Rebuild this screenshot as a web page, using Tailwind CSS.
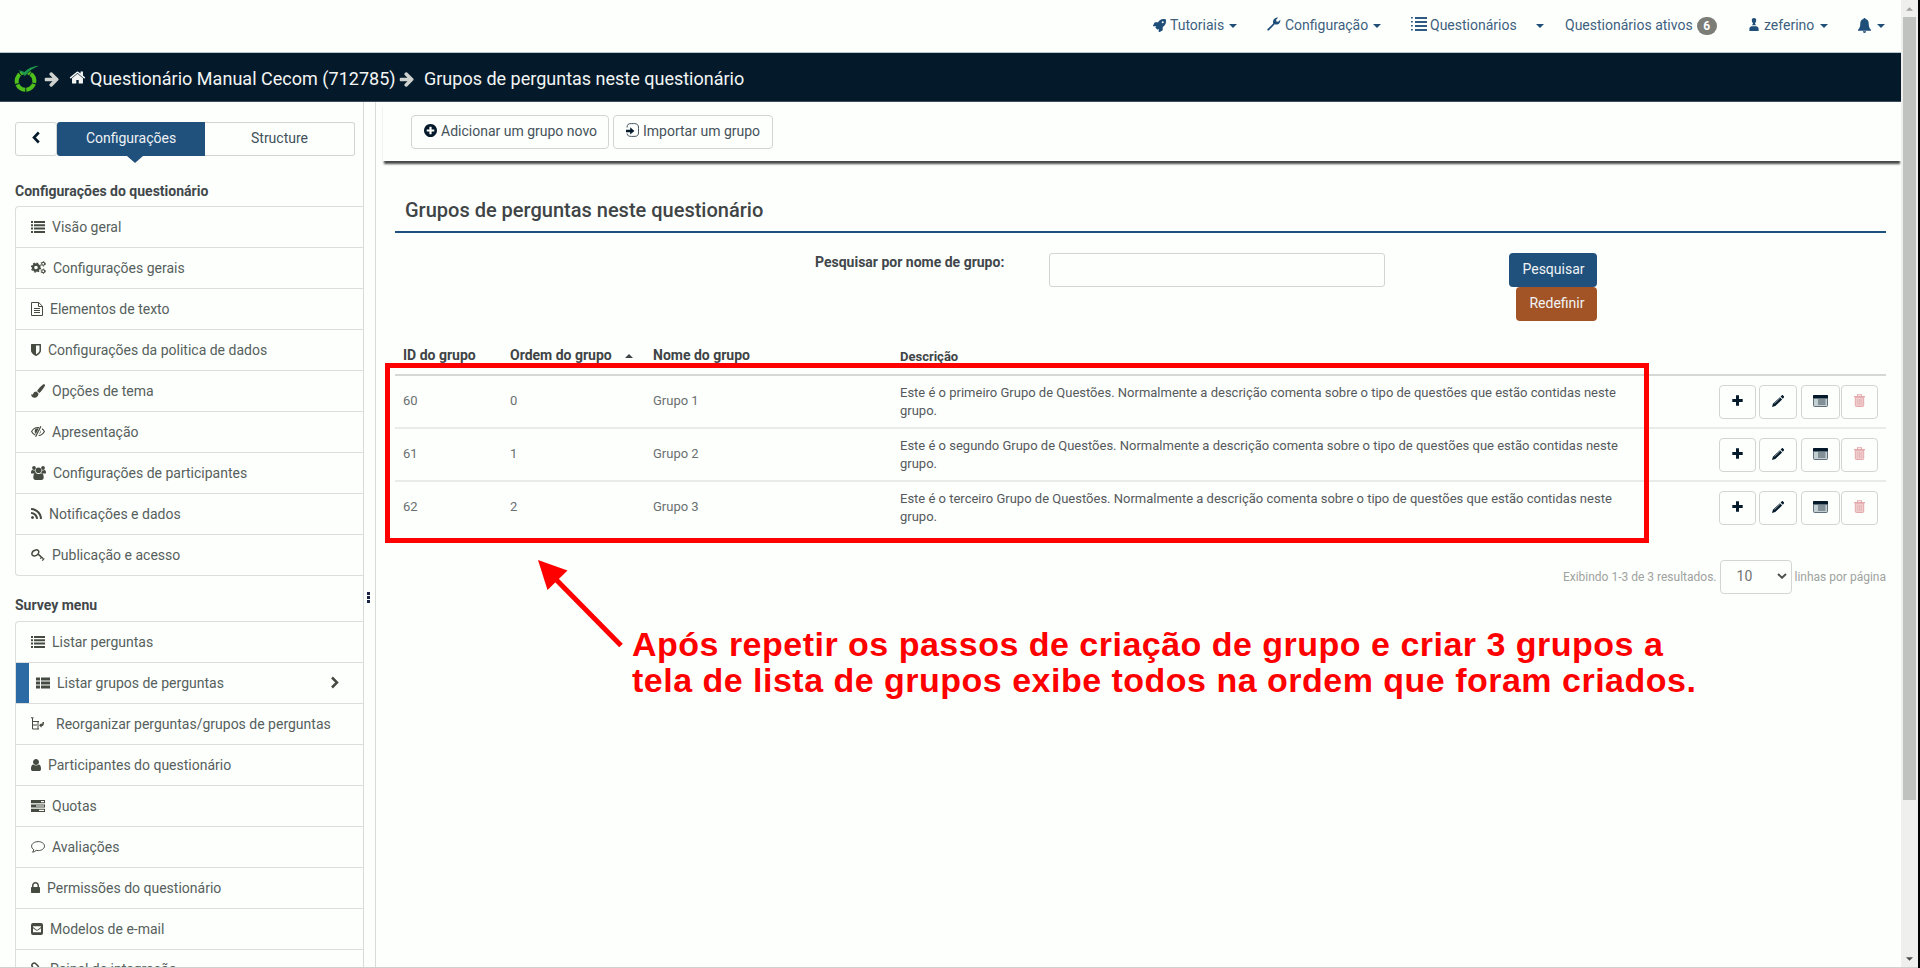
<!DOCTYPE html>
<html lang="pt-BR">
<head>
<meta charset="utf-8">
<title>Grupos de perguntas</title>
<script src="https://cdn.jsdelivr.net/npm/@tailwindcss/browser@4"></script>
</head>
<body class="bg-[#fdfffc] overflow-hidden">
<svg class="hidden">
  <symbol id="list" viewBox="0 0 14 12"><path d="M0 0h2v2H0zM0 3.300h2v2H0zM0 6.600h2v2H0zM0 9.900h2v2H0zM3 0h11v2H3zM3 3.300h11v2H3zM3 6.600h11v2H3zM3 9.900h11v2H3z"/></symbol>
  <symbol id="navlist" viewBox="0 0 16 14"><path d="M0 0h1.800v1.500H0zM0 4h1.800v1.500H0zM0 8h1.800v1.500H0zM0 12h1.800v1.500H0zM4 0h12v2H4zM4 4h12v2H4zM4 8h12v2H4zM4 12h12v2H4z"/></symbol>
  <symbol id="thlist" viewBox="0 0 14 12"><path d="M0 .5h4v3H0zM5 .5h9v3H5zM0 4.500h4v3H0zM5 4.500h9v3H5zM0 8.500h4v3H0zM5 8.500h9v3H5z"/></symbol>
  <symbol id="home" viewBox="0 0 1792 1792"><path d="M1472 992v480q0 26-19 45t-45 19h-384v-384h-256v384h-384q-26 0-45-19t-19-45v-480q0-1 .5-3t.5-3l575-474 575 474q1 2 1 6zm223-69l-62 74q-8 9-21 11h-3q-13 0-21-7l-692-577-692 577q-12 8-24 7-13-2-21-11l-62-74q-8-10-7-23.500t11-21.500l719-599q32-26 76-26t76 26l244 204v-195q0-14 9-23t23-9h192q14 0 23 9t9 23v408l219 182q10 8 11 21.500t-7 23.500z"/></symbol>
  <symbol id="arrow" viewBox="100 60 1600 1700"><path d="M1600 960q0 54-37 91l-651 651q-39 37-91 37-51 0-90-37l-75-75q-38-38-38-91t38-91l293-293h-704q-52 0-84.500-37.500t-32.500-90.500v-128q0-53 32.500-90.500t84.500-37.500h704l-293-294q-38-36-38-90t38-90l75-75q38-38 90-38 53 0 91 38l651 651q37 35 37 90z"/></symbol>
  <symbol id="lock" viewBox="320 128 1152 1408"><path d="M640 768h512v-192q0-106-75-181t-181-75-181 75-75 181v192zm832 96v576q0 40-28 68t-68 28h-960q-40 0-68-28t-28-68v-576q0-40 28-68t68-28h32v-192q0-184 132-316t316-132 316 132 132 316v192h32q40 0 68 28t28 68z"/></symbol>
  <symbol id="user" viewBox="256 128 1280 1536"><path d="M1536 1399q0 109-62.500 187t-150.500 78h-854q-88 0-150.500-78t-62.500-187q0-85 8.500-160.500t31.500-152 58.500-131 94-89 134.500-34.500q131 128 313 128t313-128q76 0 134.500 34.500t94 89 58.500 131 31.500 152 8.500 160.500zm-256-887q0 159-112.500 271.500t-271.500 112.500-271.500-112.500-112.500-271.500 112.500-271.500 271.500-112.500 271.500 112.500 112.500 271.500z"/></symbol>
  <symbol id="shield" viewBox="256 128 1280 1536"><path d="M1344 960v-640h-448v1137q119-63 213-137 235-184 235-360zm192-768v768q0 86-33.500 170.500t-83 150-118 127.500-126.500 103-121 77.500-89.500 49.500-42.500 20q-12 6-26 6t-26-6q-16-7-42.500-20t-89.500-49.500-121-77.500-126.500-103-118-127.500-83-150-33.500-170.500v-768q0-26 19-45t45-19h1152q26 0 45 19t19 45z"/></symbol>
  <symbol id="pluscircle" viewBox="128 128 1536 1536"><path d="M1344 960v-128q0-26-19-45t-45-19h-256v-256q0-26-19-45t-45-19h-128q-26 0-45 19t-19 45v256h-256q-26 0-45 19t-19 45v128q0 26 19 45t45 19h256v256q0 26 19 45t45 19h128q26 0 45-19t19-45v-256h256q26 0 45-19t19-45zm320-64q0 209-103 385.500t-279.500 279.500-385.500 103-385.500-103-279.500-279.500-103-385.500 103-385.500 279.500-279.500 385.500-103 385.500 103 279.500 279.500 103 385.500z"/></symbol>
  <symbol id="rss" viewBox="192 128 1408 1408"><path d="M576 1344q0 80-56 136t-136 56-136-56-56-136 56-136 136-56 136 56 56 136zm512 123q2 28-17 48-18 21-47 21h-135q-25 0-43-16.500t-20-41.500q-22-229-184.500-391.500t-391.500-184.500q-25-2-41.500-20t-16.500-43v-135q0-29 21-47 17-17 43-17h5q160 13 306 80.500t259 181.500q114 113 181.500 259t80.500 306zm512 2q2 27-18 47-18 20-46 20h-143q-26 0-44.500-17.500t-19.500-42.500q-12-215-101-408.500t-231.500-336-336-231.500-408.500-102q-25-1-42.500-19.500t-17.500-43.500v-143q0-28 20-46 18-18 44-18h3q262 13 501.500 120t425.500 294q187 186 294 425.500t120 501.500z"/></symbol>
  <symbol id="rocket" viewBox="0 0 512 512"><path d="M505.120 19.090c-1.190-5.530-6.660-11-12.210-12.190C460.720 0 435.510 0 410.410 0 307.180 0 245.270 55.200 199.050 128H94.840c-16.350.020-35.560 11.880-42.890 26.480L2.520 253.300A28.400 28.400 0 0 0 0 264a24 24 0 0 0 24 24h103.800l-22.460 22.470c-11.370 11.360-13 32.260 0 45.250l50.900 50.900c11.160 11.190 32.160 13.160 45.280 0L224 384.160V488a24 24 0 0 0 24 24 28.560 28.560 0 0 0 10.710-2.520l98.730-49.390c14.630-7.300 26.510-26.500 26.510-42.860V312.800C456.550 266.490 512 204.390 512 101.700c.080-25.200.080-50.400-6.880-82.610zM384 168a40 40 0 1 1 40-40 40 40 0 0 1-40 40z"/></symbol>
  <symbol id="wrench" viewBox="0 0 14 14"><path d="M.4 12.300 6.200 6.500C5.600 4.300 6.300 2.300 8.100 1.200 9 .6 10.200.4 11 .7L9.100 2.700l.3 1.800 1.800.3 2.100-2c.3 2.100-.9 4.200-3 4.700-1 .2-1.800.1-2.600-.2l-5.700 5.900c-.8.800-2.400-.1-1.600-.9z"/></symbol>
  <symbol id="bell" viewBox="0 0 13 15"><path d="M6.500 0c.7 0 1 .5 1 1.100C9.600 1.600 10.700 3.300 10.700 5.300c0 3.600.8 5.200 2.300 6.400v1H0v-1c1.500-1.200 2.300-2.800 2.300-6.400 0-2 1.100-3.700 3.200-4.200C5.500.5 5.800 0 6.500 0zM4.900 13.300h3.200c0 1-.7 1.700-1.600 1.700s-1.600-.7-1.600-1.700z"/></symbol>
  <symbol id="guser" viewBox="0 0 10 13"><path d="M5 0c1.400 0 2.200.9 2.200 2.300C7.200 3.600 6.500 4.800 6 5.400l1 1.800H3l1-1.800C3.500 4.800 2.800 3.600 2.800 2.300 2.800.9 3.600 0 5 0zM2.600 8.200h4.800C9 8.700 9.600 9.600 9.600 10.800V13H.4v-2.200c0-1.200.6-2.100 2.200-2.600z"/></symbol>
  <symbol id="cogs" viewBox="0 0 15 13"><g fill="none" stroke="currentColor"><circle cx="5" cy="6.500" r="3" stroke-width="2.400"/><circle cx="5" cy="6.500" r="4.500" stroke-width="1.300" stroke-dasharray="1.770 1.765"/><circle cx="12.200" cy="2.800" r="1.500" stroke-width="1.100"/><circle cx="12.200" cy="2.800" r="2.300" stroke-width=".8" stroke-dasharray="1.200 1.200"/><circle cx="12.200" cy="10.200" r="1.500" stroke-width="1.100"/><circle cx="12.200" cy="10.200" r="2.300" stroke-width=".8" stroke-dasharray="1.200 1.200"/></g></symbol>
  <symbol id="file" viewBox="0 0 12 14"><path fill="none" stroke="currentColor" d="M.5.5h7.200l3.800 3.800v9.200H.5zM7.500.5v4h4M3 6.500h6M3 8.500h6M3 10.500h6"/></symbol>
  <symbol id="brush" viewBox="0 0 14 14"><path d="M13.500.3c.6.5.6 1.200.2 1.900C12 4.900 10.300 7.500 8.300 8.900L6.100 6.900C7.500 4.700 9.700 2.400 12 .5c.5-.4 1-.5 1.500-.2zM5.300 7.600 7.500 9.600c0 2.700-1.700 4.200-4 4.200C1.400 13.800.3 12.400 0 10.200c1 .7 1.800.5 2.200-.5.500-1.300 1.600-2.100 3.100-2.100z"/></symbol>
  <symbol id="eyeslash" viewBox="0 0 14 11"><path fill="none" stroke="currentColor" stroke-width="1.100" d="M4.300 9.100C2.700 8.400 1.400 7.200.6 5.500 2 3 4.300 1.500 7 1.500c.5 0 .9.100 1.300.2M11 2.800c1 .7 1.800 1.600 2.400 2.700-1.200 2.200-3.200 3.800-5.800 4"/><path d="M7.600 2.400C5.500 1.800 3.500 3.200 3.700 5.400c.1 1.200.6 2 1.200 2.600z"/><path fill="none" stroke="currentColor" stroke-width="1.200" d="M9.900.3 4.600 10.700"/><path d="M9.900 4.300c.3 1.500-.4 3-1.800 3.600z"/></symbol>
  <symbol id="users" viewBox="0 0 15 14"><circle cx="3" cy="2" r="1.900"/><circle cx="12" cy="2" r="1.900"/><circle cx="7.500" cy="4.300" r="2.800"/><path d="M0 6.900C0 5 .6 3.900 1.600 4.100c.9.500 1.800.5 2.600.1-.1 1.400.3 2.500 1.100 3.200H1.300C.5 7.400 0 7.400 0 6.900zM15 6.900c0-1.900-.6-3-1.600-2.800-.9.500-1.800.5-2.600.1.100 1.400-.3 2.500-1.100 3.200h4c.8 0 1.300 0 1.300-.5zM4.700 7c1.700 1.300 3.900 1.300 5.600 0 1.700.1 2.400 1.700 2.400 4.500 0 1.600-.9 2.500-2.300 2.500H4.600c-1.400 0-2.300-.9-2.300-2.500C2.300 8.700 3 7.100 4.700 7z"/></symbol>
  <symbol id="key" viewBox="0 0 14 12"><path fill="none" stroke="currentColor" stroke-width="1.500" d="M4.900.9C6.700.6 7.900 1.500 7.800 3 7.600 4.900 5.500 6.900 3.500 7 1.800 7 .7 6 .9 4.500 1.200 2.700 3 1.200 4.900.9zM6.800 4.900l5.200 4.600"/><path fill="none" stroke="currentColor" stroke-width="1.300" d="m9.300 9.600 1.400-1.500M11.300 11.600l1.900-2.200"/></symbol>
  <symbol id="tree" viewBox="0 0 13 13"><path fill="none" stroke="currentColor" d="M0 .8h2.500M1.500 1v11M1.500 4.500H8M1.500 8H6M1.500 12H8M7 4v8"/><path d="M8 8.300 10.500 6v1.300c.8 0 1-.5 1-2.300H13c0 3-.8 4.300-2.500 4.300v1.400z"/></symbol>
  <symbol id="tasks" viewBox="0 0 14 12"><path d="M0 0h14v3.200H0zM0 4.400h14v3.200H0zM0 8.800h14V12H0z"/><path fill="#fdfffc" d="M10 1h3v1.200h-3zM5 5.400h8v1.200H5zM8 9.800h5V11H8z"/></symbol>
  <symbol id="comment" viewBox="0 0 14 12"><path fill="none" stroke="currentColor" d="M7.200.6c3.500 0 6.300 2 6.300 4.500s-2.800 4.500-6.300 4.500c-.7 0-1.300-.1-1.900-.2-1 .9-2.200 1.500-3.800 1.800.7-.8 1.200-1.500 1.300-2.500C1.400 7.900.6 6.600.6 5.100.6 2.600 3.600.6 7.200.6z"/></symbol>
  <symbol id="mail" viewBox="0 0 12 12"><path fill-rule="evenodd" d="M2 0h8a2 2 0 0 1 2 2v8a2 2 0 0 1-2 2H2a2 2 0 0 1-2-2V2a2 2 0 0 1 2-2zM2 3.300v.8l3.200 2.300c.5.4 1.100.4 1.600 0L10 4.100v-.8zM2 5.300v3.900h8V5.300L7.200 7.300c-.7.500-1.700.5-2.400 0z"/></symbol>
  <symbol id="link" viewBox="0 0 12 13"><path fill="none" stroke="currentColor" stroke-width="1.600" d="M4 7.500 1.600 5C.7 4 .7 2.700 1.600 1.800s2.300-.9 3.200 0l2 2c.9.900.9 2.200 0 3.100M5.300 5.500c-.9.900-.9 2.200 0 3.100l2.400 2.600c.9.900 2.300.9 3.200 0s.9-2.200 0-3.100L8.700 6"/></symbol>
  <symbol id="import" viewBox="0 0 13 14"><path fill="none" stroke="currentColor" stroke-width="1" d="M1 4.500C1.300 1.300 2.200.6 5.500.6h2c3.800 0 5 .9 5 4.700v3.500c0 3.700-1.100 4.600-4.600 4.600H5.500c-3 0-4-.6-4.400-2.900"/><path d="M0 6.700h4.200V4.300L8.400 8l-4.200 3.500V9.300H0z"/></symbol>
  <symbol id="plus" viewBox="0 0 11 11"><path d="M4 .3h3V4h3.700v3H7v3.700H4V7H.3V4H4z"/></symbol>
  <symbol id="pencil" viewBox="0 0 12 12"><path d="M8.600 1.500 9.700.4c.4-.4.9-.4 1.300 0l.9.900c.3.400.3.800 0 1.200l-1.100 1.200zM7.900 2.200l2.200 2.200L3.300 11.100 0 12l.9-3.200z"/><path stroke="#fdfffc" stroke-width=".5" d="m2.400 8.700 5.500-5.400"/></symbol>
  <symbol id="listalt" viewBox="0 0 15 12"><path fill="#c4cfd2" d="M.5 1h14v10.500H.5z"/><path d="M1 0h13c.6 0 1 .4 1 1v2.500H0V1c0-.6.400-1 1-1z"/><path fill="none" stroke="#51616c" stroke-width=".9" d="M.5 3v7.500c0 .6.400 1 1 1h12c.6 0 1-.4 1-1V3"/><path stroke="#41515d" d="M5 5h7.500M5 7h7.500M5 9h7.500"/></symbol>
  <symbol id="trash" viewBox="0 0 11 13"><path fill="none" stroke="currentColor" stroke-width="1.100" d="M3.500 2V.7h4V2"/><path d="M0 2h11v1.300H0z"/><path fill="#efcbcc" stroke="currentColor" d="M1.300 3.200h8.400v8.300c0 .6-.4 1-1 1H2.300c-.6 0-1-.4-1-1z"/><path stroke="currentColor" stroke-width=".6" d="M3.800 5v6M5.500 5v6M7.200 5v6"/></symbol>
  <symbol id="caret" viewBox="0 0 8 4"><path d="M0 0h8L4 4z"/></symbol>
</svg>

<div class="relative flex h-[968px] w-[1920px] overflow-hidden font-['Roboto',sans-serif] text-sm text-[#56605c]">
  <div class="flex w-[1901px] shrink-0 flex-col border-b border-[#cfd1ce]">
    <!-- top navigation -->
    <nav class="flex h-[53px] shrink-0 items-center border-b border-[#b9c9d2] pl-[1153px] pb-[2px] text-[#3d5f80] whitespace-nowrap">
      <div class="flex w-[114px] items-center"><svg class="mr-1 size-[13px] fill-[#1f4e79]"><use href="#rocket"/></svg>Tutoriais<svg class="mt-0.5 ml-[5px] h-1 w-2 fill-[#1f4e79]"><use href="#caret"/></svg></div>
      <div class="flex w-[144px] items-center"><svg class="mr-1 mb-0.5 h-[14px] w-[14px] fill-[#1f4e79]"><use href="#wrench"/></svg>Configuração<svg class="mt-0.5 ml-[5px] h-1 w-2 fill-[#1f4e79]"><use href="#caret"/></svg></div>
      <div class="flex w-[154px] items-center"><svg class="mr-[3px] mb-0.5 h-[14px] w-4 fill-[#2f5a82]"><use href="#navlist"/></svg>Questionários<svg class="mt-0.5 ml-[19px] h-1 w-2 fill-[#1f4e79]"><use href="#caret"/></svg></div>
      <div class="flex w-[184px] items-center">Questionários ativos<span class="mt-0.5 ml-1 flex h-[18px] w-5 items-center justify-center rounded-full bg-[#7d7d78] text-xs font-bold text-white">6</span></div>
      <div class="flex w-[109px] items-center"><svg class="mr-[5px] mb-0.5 h-[13px] w-[10px] fill-[#1f4e79]"><use href="#guser"/></svg>zeferino<svg class="mt-0.5 ml-[6px] h-1 w-2 fill-[#1f4e79]"><use href="#caret"/></svg></div>
      <div class="flex items-center"><svg class="h-[15px] w-[13px] fill-[#1f4e79]"><use href="#bell"/></svg><svg class="mt-0.5 ml-[6px] h-1 w-2 fill-[#1f4e79]"><use href="#caret"/></svg></div>
    </nav>
    <!-- breadcrumb bar -->
    <header class="flex h-[49px] shrink-0 items-center border-b border-[#3c4c59] bg-[#041a2b] pl-[14px] text-lg text-[#f3f5f4] whitespace-nowrap">
      <svg class="mt-0.5 mr-1 h-[28px] w-[26px]" viewBox="0 0 26 28"><circle cx="11.500" cy="17" r="8.800" fill="none" stroke="#4fbf1c" stroke-width="4" stroke-dasharray="10.100 .96" transform="rotate(-54 11.500 17)"/><path d="M4 3 11 11.500 19 5z" fill="#041a2b"/><path d="M4.500 6 10.500 8C14 4.500 19 2 25 1.800 19 4 14 7.500 11 12z" fill="#1d9a4b"/></svg>
      <svg class="mt-[3px] mr-[9px] size-4 fill-[#d0d2d0]"><use href="#arrow"/></svg>
      <svg class="mt-px mr-1 h-[17px] w-[17px] fill-[#f3f5f4]"><use href="#home"/></svg>
      <span class="mt-[3px] w-[309px] tracking-[0.02px]">Questionário Manual Cecom (712785)</span>
      <svg class="mt-[3px] mr-[9px] size-4 fill-[#d0d2d0]"><use href="#arrow"/></svg>
      <span class="mt-1">Grupos de perguntas neste questionário</span>
    </header>

    <div class="flex min-h-0 flex-1">
      <!-- sidebar -->
      <aside class="flex w-[363px] shrink-0 flex-col overflow-hidden pt-5 pl-[15px]">
        <div class="flex h-[34px] w-[340px] shrink-0 text-[#41505a]">
          <div class="flex w-[42px] items-center justify-center rounded-[3px] border border-[#d3d5d3] pb-1"><svg class="h-[13px] w-2 fill-none stroke-[#041a2b]" viewBox="0 0 8 13"><path d="M6.800 1.500 2 6.500l4.800 5" stroke-width="2.600"/></svg></div>
          <div class="relative flex w-[148px] items-center justify-center rounded-l-[3px] bg-[#20507c] pb-0.5 text-[#eef2f5]">Configurações<svg class="absolute top-[34px] left-[70px] h-[7px] w-4 fill-[#20507c]" viewBox="0 0 16 7"><path d="M0 0h16L8 7z"/></svg></div>
          <div class="flex flex-1 items-center justify-center rounded-r-[3px] border border-l-0 border-[#d3d5d3] pb-0.5">Structure</div>
        </div>
        <h2 class="mt-[25px] h-[25px] shrink-0 font-bold text-[#41474b]">Configurações do questionário</h2>
        <ul class="shrink-0 rounded-l border border-r-0 border-[#dcdedc] [&>li]:flex [&>li]:h-[41px] [&>li]:items-center [&>li]:border-b [&>li]:border-[#dcdedc] [&>li]:pb-px [&>li]:pl-[15px] [&>li:last-child]:h-10 [&>li:last-child]:border-b-0 [&_svg]:mr-[7px] [&_svg]:fill-[#454b40] [&_svg]:text-[#454b40]">
          <li><svg class="h-3 w-[14px]"><use href="#list"/></svg>Visão geral</li>
          <li><svg class="h-[13px] w-[15px]"><use href="#cogs"/></svg>Configurações gerais</li>
          <li><svg class="h-[14px] w-3"><use href="#file"/></svg>Elementos de texto</li>
          <li><svg class="h-3 w-[10px]"><use href="#shield"/></svg>Configurações da politica de dados</li>
          <li><svg class="size-[14px]"><use href="#brush"/></svg>Opções de tema</li>
          <li><svg class="h-[11px] w-[14px]"><use href="#eyeslash"/></svg>Apresentação</li>
          <li><svg class="h-[14px] w-[15px]"><use href="#users"/></svg>Configurações de participantes</li>
          <li><svg class="h-[11px] w-[11px]"><use href="#rss"/></svg>Notificações e dados</li>
          <li><svg class="h-3 w-[14px]"><use href="#key"/></svg>Publicação e acesso</li>
        </ul>
        <h2 class="mt-[19px] h-[26px] shrink-0 font-bold text-[#41474b]">Survey menu</h2>
        <ul class="shrink-0 rounded-l border border-r-0 border-[#dcdedc] [&>li]:flex [&>li]:h-[41px] [&>li]:items-center [&>li]:border-b [&>li]:border-[#dcdedc] [&>li]:pb-px [&>li]:pl-[15px] [&_svg]:mr-[7px] [&_svg]:fill-[#454b40] [&_svg]:text-[#454b40]">
          <li><svg class="h-3 w-[14px]"><use href="#list"/></svg>Listar perguntas</li>
          <li><span class="-ml-[15px] mr-[7px] h-[40px] w-[13px] bg-[#2c6aa5]"></span><svg class="h-3 w-[14px]"><use href="#thlist"/></svg>Listar grupos de perguntas<svg class="mr-6! ml-auto h-[13px] w-2 fill-none! stroke-[#454b40]" viewBox="0 0 8 13"><path d="m1 1.500 5 5-5 5" stroke-width="2.500"/></svg></li>
          <li><svg class="mr-3! h-[13px] w-[13px]"><use href="#tree"/></svg>Reorganizar perguntas/grupos de perguntas</li>
          <li><svg class="h-3 w-[10px]"><use href="#user"/></svg>Participantes do questionário</li>
          <li><svg class="h-3 w-[14px]"><use href="#tasks"/></svg>Quotas</li>
          <li><svg class="h-3 w-[14px]"><use href="#comment"/></svg>Avaliações</li>
          <li><svg class="h-[11px] w-[9px]"><use href="#lock"/></svg>Permissões do questionário</li>
          <li><svg class="size-3"><use href="#mail"/></svg>Modelos de e-mail</li>
          <li class="pb-[3px]!"><svg class="h-[13px] w-3"><use href="#link"/></svg>Painel de integração</li>
        </ul>
      </aside>
      <!-- resize handle -->
      <div class="flex w-[13px] shrink-0 flex-col gap-px border-x border-[#d9dbd9] pt-[490px] pl-[3px]">
        <i class="size-[3px] bg-[#1b2347]"></i><i class="size-[3px] bg-[#1b2347]"></i><i class="size-[3px] bg-[#1b2347]"></i>
      </div>

      <!-- content -->
      <main class="flex min-w-0 flex-1 flex-col pl-[7px]">
        <div class="flex h-[59px] shrink-0 gap-1 pt-[13px] pl-7 text-[#46525a] shadow-[0_4px_2px_-1px_#48484a]">
          <div class="flex h-[34px] w-[198px] items-center rounded border border-[#d3d5d3] pb-0.5 pl-3"><svg class="mr-1 mb-0.5 size-[13px] fill-[#041a2b]"><use href="#pluscircle"/></svg>Adicionar um grupo novo</div>
          <div class="flex h-[34px] w-[160px] items-center rounded border border-[#d3d5d3] pb-0.5 pl-3"><svg class="mr-1 mb-0.5 h-[14px] w-[13px] fill-[#041a2b] text-[#41505a]"><use href="#import"/></svg>Importar um grupo</div>
        </div>

        <div class="mr-[15px] ml-3 flex flex-col">
          <h1 class="h-[72px] border-b-2 border-[#20507c] pt-[37px] pl-[10px] text-xl leading-6 font-medium text-[#3f4446]">Grupos de perguntas neste questionário</h1>
          <div class="flex h-[101px] pt-5">
            <label class="ml-[420px] w-[234px] font-bold text-[#41474b] leading-[18px]">Pesquisar por nome de grupo:</label>
            <div class="h-[34px] w-[336px] rounded-[3px] border border-[#d3d5d3]"></div>
            <div class="ml-[124px] flex w-[88px] flex-col items-end text-[#f1f4f5]">
              <div class="flex h-[34px] w-[88px] items-center justify-center rounded-[4px] bg-[#20507c] pb-0.5 pl-px">Pesquisar</div>
              <div class="flex h-[34px] w-[81px] items-center justify-center rounded-[4px] bg-[#a35427] pb-0.5 pl-px">Redefinir</div>
            </div>
          </div>

          <div class="grid h-[42px] grid-cols-[107px_143px_247px_1fr] border-b-2 border-[#d6d8d6] pt-[11px] pl-2 font-bold text-[#3f4446]">
            <span>ID do grupo</span>
            <span class="flex h-5 items-center">Ordem do grupo<svg class="mt-0.5 ml-[13px] h-[4px] w-2 rotate-180 fill-[#3f4446]"><use href="#caret"/></svg></span>
            <span>Nome do grupo</span>
            <span class="pt-[2px] text-[13px] leading-5">Descrição</span>
          </div>
          <div class="grid h-[53px] grid-cols-[107px_143px_247px_819px_1fr] items-center border-b-2 border-[#e9ebe9] pl-2 text-[13px] text-[#6a6f71]">
            <span>60</span><span>0</span><span>Grupo 1</span>
            <p class="w-[730px] text-[13px] leading-[18px] text-[#55595c]">Este é o primeiro Grupo de Questões. Normalmente a descrição comenta sobre o tipo de questões que estão contidas neste grupo.</p>
            <div class="flex [&>span]:flex [&>span]:h-[34px] [&>span]:items-center [&>span]:justify-center [&>span]:rounded [&>span]:border [&>span]:border-[#d3d5d3] [&>span]:pb-0.5 [&_svg]:fill-[#041a2b]">
              <span class="mr-[3px] w-[37px]"><svg class="size-[11px]"><use href="#plus"/></svg></span><span class="mr-1 w-[38px]"><svg class="size-3"><use href="#pencil"/></svg></span><span class="mr-px w-[39px]"><svg class="h-3 w-[15px]"><use href="#listalt"/></svg></span><span class="w-[37px]"><svg class="h-[13px] w-[11px] fill-[#e3a9ab]! text-[#e3a9ab]"><use href="#trash"/></svg></span>
            </div>
          </div>
          <div class="grid h-[53px] grid-cols-[107px_143px_247px_819px_1fr] items-center border-b-2 border-[#e9ebe9] pl-2 text-[13px] text-[#6a6f71]">
            <span>61</span><span>1</span><span>Grupo 2</span>
            <p class="w-[730px] text-[13px] leading-[18px] text-[#55595c]">Este é o segundo Grupo de Questões. Normalmente a descrição comenta sobre o tipo de questões que estão contidas neste grupo.</p>
            <div class="flex [&>span]:flex [&>span]:h-[34px] [&>span]:items-center [&>span]:justify-center [&>span]:rounded [&>span]:border [&>span]:border-[#d3d5d3] [&>span]:pb-0.5 [&_svg]:fill-[#041a2b]">
              <span class="mr-[3px] w-[37px]"><svg class="size-[11px]"><use href="#plus"/></svg></span><span class="mr-1 w-[38px]"><svg class="size-3"><use href="#pencil"/></svg></span><span class="mr-px w-[39px]"><svg class="h-3 w-[15px]"><use href="#listalt"/></svg></span><span class="w-[37px]"><svg class="h-[13px] w-[11px] fill-[#e3a9ab]! text-[#e3a9ab]"><use href="#trash"/></svg></span>
            </div>
          </div>
          <div class="grid h-[53px] grid-cols-[107px_143px_247px_819px_1fr] items-center border-b-2 border-transparent pl-2 text-[13px] text-[#6a6f71]">
            <span>62</span><span>2</span><span>Grupo 3</span>
            <p class="w-[730px] text-[13px] leading-[18px] text-[#55595c]">Este é o terceiro Grupo de Questões. Normalmente a descrição comenta sobre o tipo de questões que estão contidas neste grupo.</p>
            <div class="flex [&>span]:flex [&>span]:h-[34px] [&>span]:items-center [&>span]:justify-center [&>span]:rounded [&>span]:border [&>span]:border-[#d3d5d3] [&>span]:pb-0.5 [&_svg]:fill-[#041a2b]">
              <span class="mr-[3px] w-[37px]"><svg class="size-[11px]"><use href="#plus"/></svg></span><span class="mr-1 w-[38px]"><svg class="size-3"><use href="#pencil"/></svg></span><span class="mr-px w-[39px]"><svg class="h-3 w-[15px]"><use href="#listalt"/></svg></span><span class="w-[37px]"><svg class="h-[13px] w-[11px] fill-[#e3a9ab]! text-[#e3a9ab]"><use href="#trash"/></svg></span>
            </div>
          </div>
          <div class="mt-[25px] flex h-[34px] items-center justify-end text-xs text-[#a0a2a0]">
            <span>Exibindo 1-3 de 3 resultados.</span>
            <div class="mr-[3px] ml-[3px] flex h-[34px] w-[72px] items-center justify-between rounded border border-[#d3d5d3] pr-1 pb-0.5 pl-4 text-sm text-[#6f7371]">10<svg class="h-[6px] w-[10px] fill-none stroke-[#4c4f4d]" viewBox="0 0 10 6"><path d="m1 1 4 3.800L9 1" stroke-width="1.900"/></svg></div>
            <span>linhas por página</span>
          </div>
        </div>
      </main>
    </div>
  </div>
  <!-- scrollbar -->
  <div class="flex w-[17px] shrink-0 flex-col items-center border-b border-[#cfd1ce] bg-[#eff0ee]">
    <svg class="mt-[7px] h-[4px] w-[7px] rotate-180 fill-[#9fa19f]"><use href="#caret"/></svg>
    <div class="mt-[6px] h-[783px] w-[13px] bg-[#c0c2bf]"></div>
    <svg class="mt-[157px] h-1 w-[7px] fill-[#4c4f4d]"><use href="#caret"/></svg>
  </div>
  <div class="w-[2px] shrink-0 bg-black"></div>

  <!-- red annotations drawn over the page -->
  <div class="absolute top-[363px] left-[385px] h-[180px] w-[1264px] border-[5px] border-[#ff0000]"></div>
  <svg class="absolute top-[560px] left-[538px] h-[88px] w-[86px]" viewBox="0 0 86 88" fill="#ff0000"><path d="M0 0 29.500 10.500 9.500 30z"/><path d="M18 19.500 83 85.500" stroke="#ff0000" stroke-width="5"/></svg>
  <p class="absolute top-[627px] left-[632px] font-['Liberation_Sans',Arial,sans-serif] text-[34px] leading-[35.5px] font-bold tracking-[0.49px] whitespace-nowrap text-[#ff0000]">Após repetir os passos de criação de grupo e criar 3 grupos a<br>tela de lista de grupos exibe todos na ordem que foram criados.</p>
</div>
</body>
</html>
